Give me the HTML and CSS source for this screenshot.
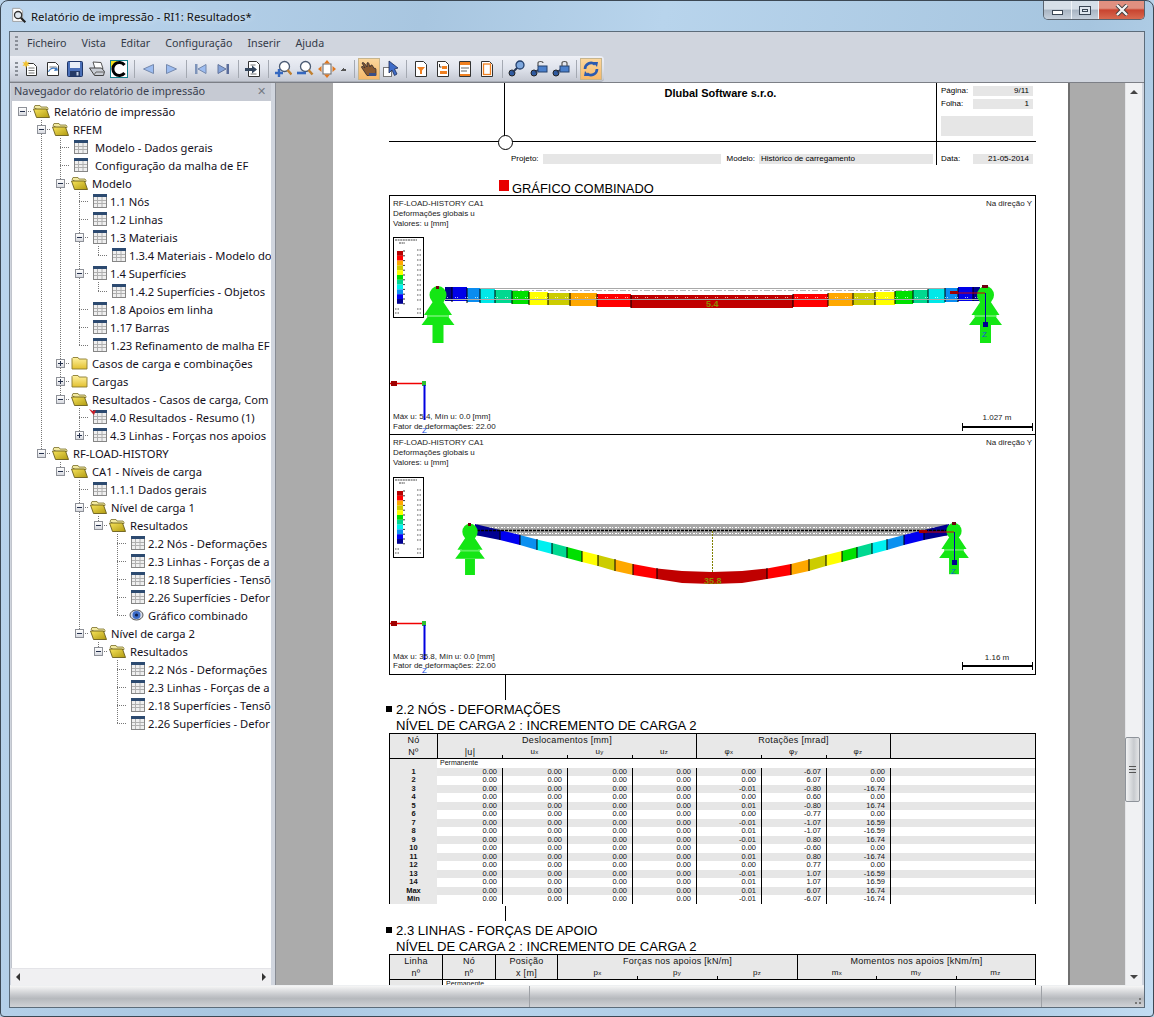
FILE: index.html
```html
<!DOCTYPE html>
<html lang="pt">
<head>
<meta charset="utf-8">
<title>Relatório de impressão - RI1: Resultados*</title>
<link rel="stylesheet" href="styles.css">
</head>
<body>
<svg class="defs" width="0" height="0" aria-hidden="true">
  <defs>
    <linearGradient id="fold" x1="0" y1="0" x2="1" y2="1"><stop offset="0" stop-color="#f8e45c"/><stop offset="1" stop-color="#b09a10"/></linearGradient>
    <linearGradient id="foldc" x1="0" y1="0" x2="0" y2="1"><stop offset="0" stop-color="#fff2a0"/><stop offset="1" stop-color="#e2c030"/></linearGradient>
    <symbol id="fo" viewBox="0 0 22 16"><path d="M2 4.500l1-2h5l1 1.500h6l1 1.500v1H5z" fill="#f2e9a0" stroke="#7a6e28" stroke-width=".8"/><path d="M1.500 6h13l3 8.500h-13z" fill="url(#fold)" stroke="#6a5e1c" stroke-width=".9"/></symbol>
    <symbol id="fc" viewBox="0 0 22 16"><path d="M2 14V3.500l1-1h5l1 1.500h7.500l.5 .5V14z" fill="url(#foldc)" stroke="#8a7a30" stroke-width=".9"/></symbol>
    <symbol id="tb" viewBox="0 0 21 16"><rect x="4.500" y="1.500" width="13" height="13" fill="#efefef" stroke="#858585"/><rect x="4" y="1" width="14" height="3" fill="#2c4a70"/><path d="M5 7.500h12M5 10.500h12M8.500 4v10M13 4v10" stroke="#b0b0b0"/></symbol>
    <symbol id="tp" viewBox="0 0 21 16"><rect x="4.500" y="1.500" width="13" height="13" fill="#efefef" stroke="#858585"/><rect x="4" y="1" width="14" height="3" fill="#2c4a70"/><path d="M5 7.500h12M5 10.500h12M8.500 4v10M13 4v10" stroke="#b0b0b0"/><path d="M0 0l4 2 3-1-2 5-2-2z" fill="#c8202a"/></symbol>
    <symbol id="ey" viewBox="0 0 21 16"><ellipse cx="9.500" cy="8" rx="6.500" ry="5" fill="#d8dde8" stroke="#555"/><circle cx="9.500" cy="8" r="4" fill="#3c6cc8"/><circle cx="9.500" cy="8" r="1.600" fill="#10204a"/></symbol>

    <symbol id="t-new" viewBox="0 0 18 18"><path d="M4.500 3.500h7l3 3v9h-10z" fill="#fff" stroke="#333"/><path d="M6.500 8h6M6.500 10.500h6M6.500 13h6" stroke="#777"/><path d="M4 0l1 2.500 2.500-.5L6 4l1.500 2L5 5.500 4 8 3 5.500.5 6 2 4 .5 2 3 2.500z" fill="#f2c230"/></symbol>
    <symbol id="t-open" viewBox="0 0 18 18"><path d="M3.500 2.500h8l3 3v10h-11z" fill="#fff" stroke="#333"/><path d="M5.500 7h7" stroke="#777"/><path d="M5 12c1-3 4-4 6-3l-1 2 4-.5-1-3.500-1 1c-3-1.500-7 0-8 4z" fill="#3a76c0"/></symbol>
    <symbol id="t-save" viewBox="0 0 18 18"><rect x="1.500" y="1.500" width="15" height="15" rx="1" fill="#4a6fb8" stroke="#1f3668"/><rect x="4" y="2" width="10" height="6" fill="#e8eef8"/><rect x="4" y="11" width="10" height="5.500" fill="#253a66"/><rect x="10.500" y="12" width="2" height="3.500" fill="#c8d4e8"/></symbol>
    <symbol id="t-print" viewBox="0 0 18 18"><path d="M5 2l8 .5 2 6H7z" fill="#fff" stroke="#555"/><path d="M1.500 8l5 7.500h9l1-4-3-3.500H6z" fill="#c8ccd4" stroke="#444"/><path d="M6 15l2-3h8" stroke="#666" fill="none"/></symbol>
    <symbol id="t-col" viewBox="0 0 18 18"><rect x=".5" y=".5" width="17" height="17" fill="#fff" stroke="#14808c"/><path d="M1 1h7L1 8z" fill="#f2e020"/><path d="M14.500 5A6.500 6.500 0 1 0 14.500 13" fill="none" stroke="#000" stroke-width="3"/></symbol>
    <symbol id="t-l" viewBox="0 0 18 18"><path d="M3.500 9L13.500 4.500v9z" fill="#9cbcf0" stroke="#7488ac"/></symbol>
    <symbol id="t-r" viewBox="0 0 18 18"><path d="M14.500 9L4.500 4.500v9z" fill="#9cbcf0" stroke="#7488ac"/></symbol>
    <symbol id="t-f" viewBox="0 0 18 18"><rect x="3" y="4" width="2.500" height="10" fill="#7e94ba"/><path d="M6 9l8-4.500v9z" fill="#9cbcf0" stroke="#7488ac"/></symbol>
    <symbol id="t-e" viewBox="0 0 18 18"><rect x="12.500" y="4" width="2.500" height="10" fill="#5a6c9a"/><path d="M12 9L4 4.500v9z" fill="#86a4da" stroke="#62749c"/></symbol>
    <symbol id="t-exp" viewBox="0 0 18 18"><path d="M4.500 1.500h8l3 3v12h-11z" fill="#fff" stroke="#333"/><path d="M6.500 5h5M6.500 14h6" stroke="#777"/><path d="M1 8h7V5.500l5 4-5 4V11H1z" fill="#33455c"/></symbol>
    <symbol id="t-zi" viewBox="0 0 18 18"><circle cx="10.500" cy="6.500" r="5" fill="#fff" stroke="#4a5a72" stroke-width="1.300"/><path d="M13.500 10l4 4.500" stroke="#c08030" stroke-width="2.500"/><path d="M5 9v8M1 13h8" stroke="#3568c0" stroke-width="2.400"/></symbol>
    <symbol id="t-zo" viewBox="0 0 18 18"><circle cx="9.500" cy="6.500" r="5" fill="#fff" stroke="#4a5a72" stroke-width="1.300"/><path d="M12.500 10l4 4.500" stroke="#c08030" stroke-width="2.500"/><path d="M1 13h9" stroke="#3568c0" stroke-width="2.600"/></symbol>
    <symbol id="t-fit" viewBox="0 0 18 18"><rect x="5" y="4" width="8" height="10" fill="#fff" stroke="#666"/><path d="M9 0l3 3.500H6zM9 18l-3-3.500h6zM0 9l3.500-3v6zM18 9l-3.500 3V6z" fill="#e07820"/></symbol>
    <symbol id="t-hand" viewBox="0 0 18 18"><path d="M2 3c1-1 2 0 3 1l2 3 0-4c1-1 2 0 2 1l1 3 1-2c1 0 2 .5 2 1.500l1 2 1-.5c1 .5 1 1.500 1 2.500v5H7L2 8c-1-1-.5-2 1-1.500l2 1.500z" fill="#8a5a30" stroke="#2e2a30" stroke-width=".8"/><path d="M9 13h7v3H9z" fill="#3a4f86"/></symbol>
    <symbol id="t-cur" viewBox="0 0 18 18"><rect x="1.500" y="7.500" width="8" height="9" fill="#fff" stroke="#777"/><path d="M7 1l9 7-3.500 1 2.500 5-2.500 1.500L10 10l-3 3z" fill="#3f6cc8" stroke="#1c2c58" stroke-width=".8"/></symbol>
    <symbol id="t-d1" viewBox="0 0 18 18"><path d="M3.500 1.500h8l3 3v12h-11z" fill="#fff" stroke="#333"/><path d="M5 7h8l-3 3.500V14H8v-3.500z" fill="#f08020"/></symbol>
    <symbol id="t-d2" viewBox="0 0 18 18"><path d="M3.500 1.500h8l3 3v12h-11z" fill="#fff" stroke="#333"/><path d="M5.500 4v3h2" stroke="#333" fill="none"/><rect x="8" y="6" width="5" height="3" fill="#f08020"/><rect x="6" y="11" width="7" height="3" fill="#f08020"/></symbol>
    <symbol id="t-d3" viewBox="0 0 18 18"><path d="M3.500 1.500h11v15h-11z" fill="#fff" stroke="#333"/><rect x="4" y="2" width="10" height="3" fill="#f08020"/><path d="M5 8h8M5 11h6" stroke="#999" stroke-width="1.300"/><rect x="4" y="14" width="10" height="2" fill="#f08020"/></symbol>
    <symbol id="t-d4" viewBox="0 0 18 18"><path d="M3.500 1.500h8l3 3v12h-11z" fill="#fff" stroke="#333"/><rect x="5.500" y="4" width="7" height="10.500" fill="#fff" stroke="#f08020" stroke-width="1.300"/></symbol>
    <symbol id="t-k1" viewBox="0 0 18 18"><circle cx="4" cy="13" r="3" fill="#2f5aa0" stroke="#222"/><path d="M5 12l6-6" stroke="#2a3a58" stroke-width="2"/><circle cx="12" cy="5" r="4" fill="#7ea8de" stroke="#24406c" stroke-width="1.300"/></symbol>
    <symbol id="t-k2" viewBox="0 0 18 18"><circle cx="4" cy="13" r="3" fill="#2f5aa0" stroke="#222"/><path d="M5 12l5-3" stroke="#2a3a58" stroke-width="2"/><rect x="8" y="6" width="9" height="6" fill="#4a80cc" stroke="#24406c"/><path d="M8 6V3c0-2 5-2 5 0" fill="none" stroke="#555" stroke-width="1.200"/></symbol>
    <symbol id="t-k3" viewBox="0 0 18 18"><circle cx="4" cy="13" r="3" fill="#2f5aa0" stroke="#222"/><path d="M5 12l5-3" stroke="#2a3a58" stroke-width="2"/><rect x="8" y="6" width="9" height="6" fill="#4a80cc" stroke="#24406c"/><path d="M10 6V3c0-2 5-2 5 0v3" fill="none" stroke="#555" stroke-width="1.200"/></symbol>
    <symbol id="t-ref" viewBox="0 0 18 18"><path d="M3 9a6 6 0 0 1 10-4.500" fill="none" stroke="#2a5ab0" stroke-width="2.600"/><path d="M15 9a6 6 0 0 1-10 4.500" fill="none" stroke="#2a5ab0" stroke-width="2.600"/><path d="M11 2l5 0-1 5zM7 16l-5 0 1-5z" fill="#2a5ab0"/></symbol>

    <g id="legend">
      <rect x=".5" y=".5" width="30" height="80" fill="#fff" stroke="#000"/>
      <path d="M2 3h22M6 6h6" stroke="#444" stroke-width="1.200" stroke-dasharray="2 .6"/>
      <rect x="4" y="14" width="6" height="4.800" fill="#b80000"/><rect x="4" y="18.800" width="6" height="4.800" fill="#ff0000"/><rect x="4" y="23.600" width="6" height="4.800" fill="#ffa800"/><rect x="4" y="28.400" width="6" height="4.800" fill="#cccc00"/><rect x="4" y="33.200" width="6" height="4.800" fill="#ffff00"/><rect x="4" y="38" width="6" height="4.800" fill="#00e000"/><rect x="4" y="42.800" width="6" height="4.800" fill="#00d890"/><rect x="4" y="47.600" width="6" height="4.800" fill="#00f0f0"/><rect x="4" y="52.400" width="6" height="4.800" fill="#0a90f0"/><rect x="4" y="57.200" width="6" height="4.800" fill="#0000f0"/><rect x="4" y="62" width="6" height="4.800" fill="#000090"/>
      <path d="M10 14h2M10 18.800h2M10 23.600h2M10 28.400h2M10 33.200h2M10 38h2M10 42.800h2M10 47.600h2M10 52.400h2M10 57.200h2M10 62h2M10 66.800h2" stroke="#000" stroke-width=".8"/>
      <path d="M24 13h4M24 18h4M24 23h4M24 28h4M24 33h4M24 38h4M24 43h4M24 48h4M24 53h4M24 58h4M24 63h4M24 72h4M24 76h4M2 72h4M2 76h4" stroke="#555" stroke-width="1.200" stroke-dasharray="1 .5"/>
    </g>
    <g id="support" fill="#14e614">
      <ellipse cx="0" cy="8" rx="8.500" ry="9"/>
      <path d="M-4 13L-14 28H-9L-16.500 38H16.500L9 28H14L4 13z"/>
      <rect x="-5.500" y="38" width="11" height="18"/>
      <path d="M-11 29h22" stroke="#5cf05c" stroke-width="2"/>
    </g>
  </defs>
</svg>

<div class="window">
  <header class="titlebar">
    <svg class="appicon" viewBox="0 0 20 20"><path d="M3 1.500h8l3 3V16H3z" fill="#fff" stroke="#999"/><circle cx="9" cy="9" r="4" fill="#dfe8f0" stroke="#333" stroke-width="1.400"/><path d="M12 12l5 5" stroke="#222" stroke-width="2.400"/></svg>
    <span class="wintitle">Relatório de impressão - RI1: Resultados*</span>
    <div class="caption">
      <span class="capbtn cap-min"><i></i></span>
      <span class="capbtn cap-max"><i></i></span>
      <span class="capbtn cap-close">
        <svg viewBox="0 0 14 12" width="14" height="12"><path d="M2 1l10 10M12 1L2 11" stroke="#3a3a3a" stroke-width="4"/><path d="M2 1l10 10M12 1L2 11" stroke="#f4f4f4" stroke-width="2.400"/></svg>
      </span>
    </div>
  </header>

  <div class="client">
    <nav class="menubar">
      <span class="grip"></span>
      <span class="menu">Ficheiro</span><span class="menu">Vista</span><span class="menu">Editar</span><span class="menu">Configuração</span><span class="menu">Inserir</span><span class="menu">Ajuda</span>
    </nav>

    <div class="toolrow">
      <div class="toolbar">
        <span class="grip"></span>
        <span class="tbtn"><svg><use href="#t-new"/></svg></span>
        <span class="tbtn"><svg><use href="#t-open"/></svg></span>
        <span class="tbtn"><svg><use href="#t-save"/></svg></span>
        <span class="tbtn"><svg><use href="#t-print"/></svg></span>
        <span class="tbtn"><svg><use href="#t-col"/></svg></span>
        <span class="tsep"></span>
        <span class="tbtn"><svg><use href="#t-l"/></svg></span>
        <span class="tbtn"><svg><use href="#t-r"/></svg></span>
        <span class="tsep"></span>
        <span class="tbtn"><svg><use href="#t-f"/></svg></span>
        <span class="tbtn"><svg><use href="#t-e"/></svg></span>
        <span class="tsep"></span>
        <span class="tbtn"><svg><use href="#t-exp"/></svg></span>
        <span class="tsep"></span>
        <span class="tbtn"><svg><use href="#t-zi"/></svg></span>
        <span class="tbtn"><svg><use href="#t-zo"/></svg></span>
        <span class="tbtn"><svg><use href="#t-fit"/></svg></span>
        <span class="tcaret"></span>
        <span class="tsep"></span>
        <span class="tbtn on"><svg><use href="#t-hand"/></svg></span>
        <span class="tbtn"><svg><use href="#t-cur"/></svg></span>
        <span class="tsep"></span>
        <span class="tbtn"><svg><use href="#t-d1"/></svg></span>
        <span class="tbtn"><svg><use href="#t-d2"/></svg></span>
        <span class="tbtn"><svg><use href="#t-d3"/></svg></span>
        <span class="tbtn"><svg><use href="#t-d4"/></svg></span>
        <span class="tsep"></span>
        <span class="tbtn"><svg><use href="#t-k1"/></svg></span>
        <span class="tbtn"><svg><use href="#t-k2"/></svg></span>
        <span class="tbtn"><svg><use href="#t-k3"/></svg></span>
        <span class="tsep"></span>
        <span class="tbtn on"><svg><use href="#t-ref"/></svg></span>
      </div>
    </div>

    <div class="main">
      <aside class="panel">
        <div class="panelhead"><span>Navegador do relatório de impressão</span><span class="panelx">✕</span></div>
        <div class="tree">
          <div class="row"><i class="c h"><b class="x m"></b></i><svg class="if"><use href="#fo"/></svg><span>Relatório de impressão</span></div>
          <div class="row"><i class="c"></i><i class="c t"><b class="x m"></b></i><svg class="if"><use href="#fo"/></svg><span>RFEM</span></div>
          <div class="row"><i class="c"></i><i class="c v"></i><i class="c t"></i><svg class="it"><use href="#tb"/></svg><span class="pad">Modelo - Dados gerais</span></div>
          <div class="row"><i class="c"></i><i class="c v"></i><i class="c t"></i><svg class="it"><use href="#tb"/></svg><span class="pad">Configuração da malha de EF</span></div>
          <div class="row"><i class="c"></i><i class="c v"></i><i class="c t"><b class="x m"></b></i><svg class="if"><use href="#fo"/></svg><span>Modelo</span></div>
          <div class="row"><i class="c"></i><i class="c v"></i><i class="c v"></i><i class="c t"></i><svg class="it"><use href="#tb"/></svg><span>1.1 Nós</span></div>
          <div class="row"><i class="c"></i><i class="c v"></i><i class="c v"></i><i class="c t"></i><svg class="it"><use href="#tb"/></svg><span>1.2 Linhas</span></div>
          <div class="row"><i class="c"></i><i class="c v"></i><i class="c v"></i><i class="c t"><b class="x m"></b></i><svg class="it"><use href="#tb"/></svg><span>1.3 Materiais</span></div>
          <div class="row"><i class="c"></i><i class="c v"></i><i class="c v"></i><i class="c v"></i><i class="c l"></i><svg class="it"><use href="#tb"/></svg><span>1.3.4 Materiais - Modelo do</span></div>
          <div class="row"><i class="c"></i><i class="c v"></i><i class="c v"></i><i class="c t"><b class="x m"></b></i><svg class="it"><use href="#tb"/></svg><span>1.4 Superfícies</span></div>
          <div class="row"><i class="c"></i><i class="c v"></i><i class="c v"></i><i class="c v"></i><i class="c l"></i><svg class="it"><use href="#tb"/></svg><span>1.4.2 Superfícies - Objetos</span></div>
          <div class="row"><i class="c"></i><i class="c v"></i><i class="c v"></i><i class="c t"></i><svg class="it"><use href="#tb"/></svg><span>1.8 Apoios em linha</span></div>
          <div class="row"><i class="c"></i><i class="c v"></i><i class="c v"></i><i class="c t"></i><svg class="it"><use href="#tb"/></svg><span>1.17 Barras</span></div>
          <div class="row"><i class="c"></i><i class="c v"></i><i class="c v"></i><i class="c l"></i><svg class="it"><use href="#tb"/></svg><span>1.23 Refinamento de malha EF</span></div>
          <div class="row"><i class="c"></i><i class="c v"></i><i class="c t"><b class="x p"></b></i><svg class="if"><use href="#fc"/></svg><span>Casos de carga e combinações</span></div>
          <div class="row"><i class="c"></i><i class="c v"></i><i class="c t"><b class="x p"></b></i><svg class="if"><use href="#fc"/></svg><span>Cargas</span></div>
          <div class="row"><i class="c"></i><i class="c v"></i><i class="c l"><b class="x m"></b></i><svg class="if"><use href="#fo"/></svg><span>Resultados - Casos de carga, Com</span></div>
          <div class="row"><i class="c"></i><i class="c v"></i><i class="c"></i><i class="c t"></i><svg class="it"><use href="#tp"/></svg><span>4.0 Resultados - Resumo (1)</span></div>
          <div class="row"><i class="c"></i><i class="c v"></i><i class="c"></i><i class="c l"><b class="x p"></b></i><svg class="it"><use href="#tb"/></svg><span>4.3 Linhas - Forças nos apoios</span></div>
          <div class="row"><i class="c"></i><i class="c l"><b class="x m"></b></i><svg class="if"><use href="#fo"/></svg><span>RF-LOAD-HISTORY</span></div>
          <div class="row"><i class="c"></i><i class="c"></i><i class="c l"><b class="x m"></b></i><svg class="if"><use href="#fo"/></svg><span>CA1 - Níveis de carga</span></div>
          <div class="row"><i class="c"></i><i class="c"></i><i class="c"></i><i class="c t"></i><svg class="it"><use href="#tb"/></svg><span>1.1.1 Dados gerais</span></div>
          <div class="row"><i class="c"></i><i class="c"></i><i class="c"></i><i class="c t"><b class="x m"></b></i><svg class="if"><use href="#fo"/></svg><span>Nível de carga 1</span></div>
          <div class="row"><i class="c"></i><i class="c"></i><i class="c"></i><i class="c v"></i><i class="c l"><b class="x m"></b></i><svg class="if"><use href="#fo"/></svg><span>Resultados</span></div>
          <div class="row"><i class="c"></i><i class="c"></i><i class="c"></i><i class="c v"></i><i class="c"></i><i class="c t"></i><svg class="it"><use href="#tb"/></svg><span>2.2 Nós - Deformações</span></div>
          <div class="row"><i class="c"></i><i class="c"></i><i class="c"></i><i class="c v"></i><i class="c"></i><i class="c t"></i><svg class="it"><use href="#tb"/></svg><span>2.3 Linhas - Forças de a</span></div>
          <div class="row"><i class="c"></i><i class="c"></i><i class="c"></i><i class="c v"></i><i class="c"></i><i class="c t"></i><svg class="it"><use href="#tb"/></svg><span>2.18 Superfícies - Tensõ</span></div>
          <div class="row"><i class="c"></i><i class="c"></i><i class="c"></i><i class="c v"></i><i class="c"></i><i class="c t"></i><svg class="it"><use href="#tb"/></svg><span>2.26 Superfícies - Defor</span></div>
          <div class="row"><i class="c"></i><i class="c"></i><i class="c"></i><i class="c v"></i><i class="c"></i><i class="c l"></i><svg class="it"><use href="#ey"/></svg><span>Gráfico combinado</span></div>
          <div class="row"><i class="c"></i><i class="c"></i><i class="c"></i><i class="c l"><b class="x m"></b></i><svg class="if"><use href="#fo"/></svg><span>Nível de carga 2</span></div>
          <div class="row"><i class="c"></i><i class="c"></i><i class="c"></i><i class="c"></i><i class="c l"><b class="x m"></b></i><svg class="if"><use href="#fo"/></svg><span>Resultados</span></div>
          <div class="row"><i class="c"></i><i class="c"></i><i class="c"></i><i class="c"></i><i class="c"></i><i class="c t"></i><svg class="it"><use href="#tb"/></svg><span>2.2 Nós - Deformações</span></div>
          <div class="row"><i class="c"></i><i class="c"></i><i class="c"></i><i class="c"></i><i class="c"></i><i class="c t"></i><svg class="it"><use href="#tb"/></svg><span>2.3 Linhas - Forças de a</span></div>
          <div class="row"><i class="c"></i><i class="c"></i><i class="c"></i><i class="c"></i><i class="c"></i><i class="c t"></i><svg class="it"><use href="#tb"/></svg><span>2.18 Superfícies - Tensõ</span></div>
          <div class="row"><i class="c"></i><i class="c"></i><i class="c"></i><i class="c"></i><i class="c"></i><i class="c l"></i><svg class="it"><use href="#tb"/></svg><span>2.26 Superfícies - Defor</span></div>
        </div>
        <div class="hscroll"><span class="arrow a-l"></span><span class="arrow a-r"></span></div>
      </aside>
      <div class="splitter"></div>

      <section class="viewer">
        <div class="canvas">
          <article class="page">
            <div class="sheethead">
              <div class="sh-a"></div>
              <div class="sh-b">Dlubal Software s.r.o.</div>
              <div class="sh-c">
                <div class="kv"><span>Página:</span><em>9/11</em></div>
                <div class="kv"><span>Folha:</span><em>1</em></div>
                <div class="blank"></div>
              </div>
              <div class="sh-d"></div>
              <div class="sh-e">
                <span class="lbl">Projeto:</span><em class="fld f-proj"></em>
                <span class="lbl l-mod">Modelo:</span><em class="fld f-mod">Histórico de carregamento</em>
              </div>
              <div class="sh-f"><div class="kv"><span>Data:</span><em>21-05-2014</em></div></div>
              <span class="cross"></span>
            </div>

            <h2 class="gtitle"><span class="redsq"></span><span class="gtext">GRÁFICO COMBINADO</span></h2>

            <div class="chart c1">
              <svg width="645" height="238" viewBox="390 196 645 238">
                <text class="ct" x="393" y="206">RF-LOAD-HISTORY CA1</text>
                <text class="ct" x="393" y="216">Deformações globais u</text>
                <text class="ct" x="393" y="226">Valores: u [mm]</text>
                <text class="ct" x="1032" y="206" text-anchor="end">Na direção Y</text>
                <use href="#legend" x="393" y="237"/>
                <path d="M445 288.500h540" stroke="#a8a8a8"/>
                <path d="M500 290.500h430" stroke="#b8b8b8" stroke-dasharray="6 2 2 2"/>
                <rect x="445" y="287" width="7" height="14" fill="#000090"/><rect x="452" y="287" width="15" height="14" fill="#0000e8"/><rect x="467" y="288" width="13" height="14" fill="#0a8cf0"/><rect x="480" y="289" width="15" height="14" fill="#00e8e8"/><rect x="495" y="290" width="17" height="13" fill="#00d890"/><rect x="512" y="291" width="17" height="13" fill="#00e000"/><rect x="529" y="292" width="19" height="13" fill="#ffff00"/><rect x="548" y="293" width="22" height="12" fill="#cccc00"/><rect x="570" y="293" width="27" height="13" fill="#ffa800"/><rect x="597" y="294" width="34" height="13" fill="#ff0000"/><rect x="631" y="295" width="162" height="13" fill="#c00000"/><rect x="793" y="294" width="35" height="13" fill="#ff0000"/><rect x="828" y="293" width="25" height="13" fill="#ffa800"/><rect x="853" y="293" width="22" height="12" fill="#cccc00"/><rect x="875" y="292" width="20" height="13" fill="#ffff00"/><rect x="895" y="291" width="18" height="13" fill="#00e000"/><rect x="913" y="290" width="15" height="13" fill="#00d890"/><rect x="928" y="289" width="17" height="14" fill="#00e8e8"/><rect x="945" y="288" width="13" height="14" fill="#0a8cf0"/><rect x="958" y="287" width="15" height="14" fill="#0000e8"/><rect x="973" y="287" width="7" height="14" fill="#000090"/>
                <path d="M452 287v15M467 288v15M480 289v14M495 290v13M512 291v13M529 292v13M548 293v12M570 293v13M597 294v13M631 295v13M793 294v13M828 293v13M853 293v12M875 292v13M895 291v13M913 290v13M928 289v14M945 288v14M958 288v14M973 287v14" stroke="#000" stroke-width="1"/>
                <path d="M445 299.500h540" stroke="#a8a8a8"/>
                <path d="M445 297.500h535" stroke="#fff" stroke-opacity=".7" stroke-dasharray="1 1 1 7"/>
                <text class="cv" x="706" y="307">5.4</text>
                <use href="#support" x="438" y="287"/>
                <use href="#support" x="985.500" y="287"/>
                <rect x="436" y="286" width="3" height="3" fill="#700010"/><rect x="982" y="285" width="6" height="3" fill="#700010"/>
                <path d="M950 293h35" stroke="#d00000"/><rect x="950" y="291" width="8" height="3" fill="#a00000"/>
                <path d="M985.500 293v30" stroke="#0000b0"/><rect x="983" y="322" width="5" height="5" fill="#000090"/>
                <text class="cz" x="982" y="337">Z</text>
                <path d="M390 383.500h34" stroke="#f00000" stroke-width="1.500"/><rect x="391" y="381" width="6" height="5" fill="#a00000"/>
                <rect x="422" y="381" width="4" height="5" fill="#30c030"/>
                <path d="M424.500 385v35" stroke="#0000e0" stroke-width="2"/>
                <text class="ct" x="393" y="419">Máx u: 5.4, Mín u: 0.0 [mm]</text>
                <text class="ct" x="393" y="429">Fator de deformações: 22.00</text>
                <text class="cz" x="422" y="433">Z</text>
                <text class="ct" x="997" y="420" text-anchor="middle">1.027 m</text>
                <path d="M962.500 423v8M1032.500 423v8" stroke="#000"/><path d="M962 427h71" stroke="#000" stroke-width="2"/>
              </svg>
            </div>

            <div class="chart c2">
              <svg width="645" height="239" viewBox="390 435 645 239">
                <text class="ct" x="393" y="445">RF-LOAD-HISTORY CA1</text>
                <text class="ct" x="393" y="455">Deformações globais u</text>
                <text class="ct" x="393" y="465">Valores: u [mm]</text>
                <text class="ct" x="1032" y="445" text-anchor="end">Na direção Y</text>
                <use href="#legend" x="393" y="477"/>
                <rect x="477" y="524" width="470" height="12" fill="#a8a8a8"/>
                <path d="M477 527.500h470M477 533.500h470" stroke="#fff" stroke-dasharray="2 1 1 2"/>
                <path d="M475 524L500 530V540L475 535z" fill="#000090"/>
                <path d="M500 530L520 535V545L500 540z" fill="#0000f0"/>
                <path d="M520 535L537 539.500V550L520 545z" fill="#0a90f0"/>
                <path d="M537 539.500L552 543V554L537 550z" fill="#00f0f0"/>
                <path d="M552 543L567 547V558L552 554z" fill="#00d890"/>
                <path d="M567 547L582 551V562L567 558z" fill="#00e000"/>
                <path d="M582 551L598 555V566L582 562z" fill="#ffff00"/>
                <path d="M598 555L615 559.500V571L598 566z" fill="#cccc00"/>
                <path d="M615 559.500L633 564V575L615 571z" fill="#ffa800"/>
                <path d="M633 564L657 568.500V579L633 575z" fill="#ff0000"/>
                <path d="M657 568.500L682 571L712 572L742 571L767 568.500V579L742 583L712 584L682 583L657 579z" fill="#c00000"/>
                <path d="M767 568.500L791 564V575L767 579z" fill="#ff0000"/>
                <path d="M791 564L809 559.500V571L791 575z" fill="#ffa800"/>
                <path d="M809 559.500L826 555V566L809 571z" fill="#cccc00"/>
                <path d="M826 555L842 551V562L826 566z" fill="#ffff00"/>
                <path d="M842 551L857 547V558L842 562z" fill="#00e000"/>
                <path d="M857 547L872 543V554L857 558z" fill="#00d890"/>
                <path d="M872 543L887 539.500V550L872 554z" fill="#00f0f0"/>
                <path d="M887 539.500L904 535V545L887 550z" fill="#0a90f0"/>
                <path d="M904 535L924 530V540L904 545z" fill="#0000f0"/>
                <path d="M924 530L949 524V535L924 540z" fill="#000090"/>
                <path d="M500 530v10M520 535v10M537 539v11M552 543v11M567 547v11M582 551v11M598 555v11M615 559v12M633 564v11M657 568v11M767 568v11M791 564v11M809 559v12M826 555v11M842 551v11M857 547v11M872 543v11M887 539v11M904 535v10M924 530v10" stroke="#000" stroke-width="1"/>
                <path d="M477 530.500h470" stroke="#000" stroke-width="1.500" stroke-dasharray="3 1"/>
                <path d="M712.500 531v41" stroke="#808000" stroke-dasharray="2 1"/>
                <text class="cv" x="704" y="584">35.8</text>
                <use href="#support" x="470" y="524" transform="translate(47 53) scale(.9)"/>
                <use href="#support" x="1060" y="582" transform="scale(.9)"/>
                <rect x="468" y="523" width="3" height="3" fill="#700010"/><rect x="952" y="522" width="4" height="3" fill="#700010"/>
                <path d="M919 532h35" stroke="#d00000"/><rect x="919" y="530" width="8" height="3" fill="#a00000"/>
                <path d="M954.500 532v30" stroke="#0000b0"/><rect x="952" y="560" width="5" height="5" fill="#000090"/>
                <text class="cz" x="951" y="574">Z</text>
                <path d="M390 623.500h34" stroke="#f00000" stroke-width="1.500"/><rect x="391" y="621" width="6" height="5" fill="#a00000"/>
                <rect x="422" y="621" width="4" height="5" fill="#30c030"/>
                <path d="M424.500 625v35" stroke="#0000e0" stroke-width="2"/>
                <text class="ct" x="393" y="659">Máx u: 35.8, Mín u: 0.0 [mm]</text>
                <text class="ct" x="393" y="668">Fator de deformações: 22.00</text>
                <text class="cz" x="422" y="673">Z</text>
                <text class="ct" x="997" y="660" text-anchor="middle">1.16 m</text>
                <path d="M962.500 662v8M1032.500 662v8" stroke="#000"/><path d="M962 666h71" stroke="#000" stroke-width="2"/>
              </svg>
            </div>

            <div class="tick t1"></div>

            <div class="sect">
              <span class="bullet"></span>
              <h3>2.2 NÓS - DEFORMAÇÕES<br>NÍVEL DE CARGA 2 : INCREMENTO DE CARGA 2</h3>
            </div>

            <div class="tbl t-a">
              <div class="th">
                <span class="r1">Nó</span><span class="r1 bl s4">Deslocamentos [mm]</span><span class="r1 bl s3">Rotações [mrad]</span><span class="r1 bl"></span>
                <span>Nº</span><span class="bl">|u|</span><span class="tk sm">u<sub>x</sub></span><span class="tk sm">u<sub>Y</sub></span><span class="tk sm">u<sub>z</sub></span><span class="bl sm">φ<sub>x</sub></span><span class="tk sm">φ<sub>Y</sub></span><span class="tk sm">φ<sub>z</sub></span><span class="bl"></span>
              </div>
              <div class="tr perm"><b></b><u>Permanente</u></div>
              <div class="tr"><b>1</b><i>0.00</i><i>0.00</i><i>0.00</i><i>0.00</i><i>0.00</i><i>-6.07</i><i>0.00</i><i></i></div>
              <div class="tr"><b>2</b><i>0.00</i><i>0.00</i><i>0.00</i><i>0.00</i><i>0.00</i><i>6.07</i><i>0.00</i><i></i></div>
              <div class="tr"><b>3</b><i>0.00</i><i>0.00</i><i>0.00</i><i>0.00</i><i>-0.01</i><i>-0.80</i><i>-16.74</i><i></i></div>
              <div class="tr"><b>4</b><i>0.00</i><i>0.00</i><i>0.00</i><i>0.00</i><i>0.00</i><i>0.60</i><i>0.00</i><i></i></div>
              <div class="tr"><b>5</b><i>0.00</i><i>0.00</i><i>0.00</i><i>0.00</i><i>0.01</i><i>-0.80</i><i>16.74</i><i></i></div>
              <div class="tr"><b>6</b><i>0.00</i><i>0.00</i><i>0.00</i><i>0.00</i><i>0.00</i><i>-0.77</i><i>0.00</i><i></i></div>
              <div class="tr"><b>7</b><i>0.00</i><i>0.00</i><i>0.00</i><i>0.00</i><i>-0.01</i><i>-1.07</i><i>16.59</i><i></i></div>
              <div class="tr"><b>8</b><i>0.00</i><i>0.00</i><i>0.00</i><i>0.00</i><i>0.01</i><i>-1.07</i><i>-16.59</i><i></i></div>
              <div class="tr"><b>9</b><i>0.00</i><i>0.00</i><i>0.00</i><i>0.00</i><i>-0.01</i><i>0.80</i><i>16.74</i><i></i></div>
              <div class="tr"><b>10</b><i>0.00</i><i>0.00</i><i>0.00</i><i>0.00</i><i>0.00</i><i>-0.60</i><i>0.00</i><i></i></div>
              <div class="tr"><b>11</b><i>0.00</i><i>0.00</i><i>0.00</i><i>0.00</i><i>0.01</i><i>0.80</i><i>-16.74</i><i></i></div>
              <div class="tr"><b>12</b><i>0.00</i><i>0.00</i><i>0.00</i><i>0.00</i><i>0.00</i><i>0.77</i><i>0.00</i><i></i></div>
              <div class="tr"><b>13</b><i>0.00</i><i>0.00</i><i>0.00</i><i>0.00</i><i>-0.01</i><i>1.07</i><i>-16.59</i><i></i></div>
              <div class="tr"><b>14</b><i>0.00</i><i>0.00</i><i>0.00</i><i>0.00</i><i>0.01</i><i>1.07</i><i>16.59</i><i></i></div>
              <div class="tr"><b>Max</b><i>0.00</i><i>0.00</i><i>0.00</i><i>0.00</i><i>0.01</i><i>6.07</i><i>16.74</i><i></i></div>
              <div class="tr"><b>Min</b><i>0.00</i><i>0.00</i><i>0.00</i><i>0.00</i><i>-0.01</i><i>-6.07</i><i>-16.74</i><i></i></div>
            </div>

            <div class="tick t2"></div>

            <div class="sect">
              <span class="bullet"></span>
              <h3>2.3 LINHAS - FORÇAS DE APOIO<br>NÍVEL DE CARGA 2 : INCREMENTO DE CARGA 2</h3>
            </div>

            <div class="tbl t-b">
              <div class="th">
                <span class="r1">Linha</span><span class="r1 bl">Nó</span><span class="r1 bl">Posição</span><span class="r1 bl s3">Forças nos apoios [kN/m]</span><span class="r1 bl s3">Momentos nos apoios [kNm/m]</span>
                <span>nº</span><span class="bl">nº</span><span class="bl">x [m]</span><span class="bl sm">p<sub>x</sub></span><span class="tk sm">p<sub>Y</sub></span><span class="tk sm">p<sub>z</sub></span><span class="bl sm">m<sub>x</sub></span><span class="tk sm">m<sub>Y</sub></span><span class="tk sm">m<sub>z</sub></span>
              </div>
              <div class="tr perm"><b></b><u class="bl">Permanente</u></div>
            </div>
          </article>
        </div>
        <div class="vscroll">
          <span class="arrow a-u"></span>
          <span class="thumb"><i></i></span>
          <span class="arrow a-d"></span>
        </div>
      </section>
    </div>

    <footer class="statusbar">
      <span class="s s1"></span><span class="s s2"></span><span class="s s3b"></span><span class="s s4b"></span>
    </footer>
  </div>
</div>
</body>
</html>
```
FILE: styles.css
```css
* { box-sizing: border-box; }
html, body { margin: 0; padding: 0; }
body { width: 1154px; height: 1017px; overflow: hidden; background: #b9d3ea; font-family: "Noto Sans", "Liberation Sans", sans-serif; color: #111; }
.defs { position: absolute; }
i, em, u, b { font-style: normal; text-decoration: none; font-weight: normal; }

.window { width: 1154px; height: 1017px; display: flex; flex-direction: column; padding: 0 8px 8px; border: 1px solid #3c4854; border-radius: 8px 8px 4px 4px; background: linear-gradient(100deg, #bcd6ee 0%, #a8c6e0 32%, #b8d4ec 50%, #a6c5df 82%, #c2dcf2 100%); }
.titlebar { height: 30px; flex: none; display: flex; align-items: center; margin-left: -1px; position: relative; }
.appicon { width: 18px; height: 18px; margin: 0 3px 0 2px; flex: none; }
.wintitle { font-size: 11.35px; color: #111; text-shadow: 0 0 6px #e8f2fb; }
.caption { display: flex; height: 19px; margin-left: auto; margin-top: -11px; border: 1px solid #59636e; border-top: 0; border-radius: 0 0 5px 5px; overflow: hidden; }
.capbtn { display: grid; place-items: center; height: 18px; background: linear-gradient(#d6dfe8 0 45%, #a8b4c2 50%, #c6d0dc 100%); border-right: 1px solid #f0f4f8; }
.cap-min { width: 28px; }
.cap-min i { width: 11px; height: 5px; background: #fff; border: 1px solid #3a4654; margin-top: 4px; }
.cap-max { width: 27px; }
.cap-max i { width: 12px; height: 9px; background: #dfe6ee; border: 1px solid #3a4654; box-shadow: inset 0 0 0 2px #dfe6ee, inset 0 0 0 3px #3a4654; }
.cap-close { width: 45px; border-right: 0; background: linear-gradient(#e09080 0 40%, #c84430 50%, #d86a50 100%); }

.client { flex: 1; min-height: 0; display: flex; flex-direction: column; background: #d0d5de; border: 1px solid #5c6c7a; }
.menubar { height: 24px; flex: none; display: flex; align-items: center; padding: 0 0 2px 5px; font-size: 10.7px; }
.grip { width: 3px; height: 14px; flex: none; background: repeating-linear-gradient(#8a8f98 0 2px, transparent 2px 4px); }
.menubar .grip { margin-right: 9px; }
.menu { color: #333a48; margin-right: 15px; }
.toolrow { height: 26px; flex: none; display: flex; }
.toolbar { width: 594px; display: flex; align-items: center; padding-left: 5px; background: linear-gradient(#eef0f6, #dfe3ec 50%, #c4c8d2); border-radius: 0 4px 4px 0; border-bottom: 1px solid #a8adb6; }
.toolbar .grip { margin-right: 2px; }
.tbtn { width: 22px; height: 22px; flex: none; display: grid; place-items: center; }
.tbtn svg { width: 18px; height: 18px; }
.tbtn.on { background: linear-gradient(#fbd79c, #f6b869); border: 1px solid #c6b58e; }
.tsep { width: 8px; height: 18px; flex: none; background: linear-gradient(#a4a9b2, #a4a9b2) center / 1px 100% no-repeat; }
.tcaret { width: 12px; height: 22px; flex: none; background: linear-gradient(135deg, transparent 50%, #555 50%) 3px 10px / 3px 3px no-repeat, linear-gradient(225deg, transparent 50%, #555 50%) 6px 10px / 3px 3px no-repeat; }

.main { flex: 1; min-height: 0; display: flex; border-top: 1px solid #7c7f86; }
.panel { width: 260px; flex: none; display: flex; flex-direction: column; margin-left: 1px; }
.panelhead { height: 18px; flex: none; display: flex; align-items: center; justify-content: space-between; padding: 0 5px 3px 3px; font-size: 10.9px; color: #3a4150; background: #c6cad3; }
.panelx { font-size: 11px; color: #757a84; }
.tree { flex: 1; min-height: 0; overflow: hidden; background: #fff; padding: 1px 0 0 1px; border-left: 1px solid #c0c4cc; font-size: 11.2px; }
.row { height: 18px; display: flex; align-items: center; white-space: nowrap; color: #14101c; }
.pad { padding-left: 4px; }
.c { width: 19px; height: 18px; flex: none; display: grid; place-items: center; }
.v { background: repeating-linear-gradient(#777 0 1px, transparent 1px 2px) 9px 0 / 1px 100% no-repeat; }
.t { background: repeating-linear-gradient(#777 0 1px, transparent 1px 2px) 9px 0 / 1px 100% no-repeat, repeating-linear-gradient(90deg, #777 0 1px, transparent 1px 2px) 9px 9px / 10px 1px no-repeat; }
.l { background: repeating-linear-gradient(#777 0 1px, transparent 1px 2px) 9px 0 / 1px 9px no-repeat, repeating-linear-gradient(90deg, #777 0 1px, transparent 1px 2px) 9px 9px / 10px 1px no-repeat; }
.h { background: repeating-linear-gradient(90deg, #777 0 1px, transparent 1px 2px) 9px 9px / 10px 1px no-repeat; }
.x { width: 9px; height: 9px; border: 1px solid #8e9198; background-color: #f4f4f6; margin-left: -1px; }
.x.m { background: linear-gradient(#24304c, #24304c) center / 5px 1px no-repeat, linear-gradient(#fff, #d8dae0); }
.x.p { background: linear-gradient(#24304c, #24304c) center / 5px 1px no-repeat, linear-gradient(#24304c, #24304c) center / 1px 5px no-repeat, linear-gradient(#fff, #d8dae0); }
.if { width: 22px; height: 16px; flex: none; }
.it { width: 21px; height: 16px; flex: none; }
.hscroll { height: 17px; flex: none; background: #f0f0f2; display: flex; justify-content: space-between; align-items: center; padding: 0 5px; border-top: 1px solid #e4e4e8; }
.arrow { width: 0; height: 0; border: 4px solid transparent; display: block; }
.a-l { border-right: 4px solid #333; border-left: 0; }
.a-r { border-left: 4px solid #333; border-right: 0; }
.splitter { width: 5px; flex: none; background: #d0d5de; border-right: 1px solid #878b93; }

.viewer { flex: 1; min-width: 0; display: flex; }
.canvas { width: 849px; flex: none; overflow: hidden; background: #ababab; padding-left: 57px; }
.page { width: 737px; height: 1100px; background: #fff; border-right: 2px solid #6f6f6f; padding-left: 56px; color: #000; font-family: "Liberation Sans", Arial, sans-serif; }
.vscroll { width: 17px; flex: none; background: #f0f1f3; display: flex; flex-direction: column; align-items: center; padding: 7px 0 6px; border-left: 1px solid #e4e5e8; }
.a-u { border-bottom: 4px solid #444; border-top: 0; }
.a-d { border-top: 4px solid #444; border-bottom: 0; margin-top: 173px; }
.thumb { width: 15px; height: 65px; margin: 643px 0 0 -3px; display: grid; place-items: center; border: 1px solid #8e939a; border-radius: 2px; background: linear-gradient(90deg, #f2f3f4, #c8cbcf 60%, #e4e5e7); }
.thumb i { width: 7px; height: 8px; background: repeating-linear-gradient(#555 0 1px, transparent 1px 3px); }

.statusbar { height: 22px; flex: none; display: flex; background: linear-gradient(#f6f6f6, #c4c6ca 45%, #b6b9bd 60%, #d0d2d6); border-top: 1px solid #eef0f2; }
.s { height: 100%; border-right: 1px solid #9ea1a6; }
.s1 { width: 520px; } .s2 { width: 426px; } .s3b { width: 86px; } .s4b { flex: 1; border-right: 0; background: radial-gradient(circle, #777 1px, transparent 1.300px) right 2px bottom 2px / 4px 4px no-repeat, radial-gradient(circle, #777 1px, transparent 1.300px) right 6px bottom 2px / 4px 4px no-repeat, radial-gradient(circle, #777 1px, transparent 1.300px) right 2px bottom 6px / 4px 4px no-repeat; }

.sheethead { width: 647px; height: 82px; display: grid; grid-template-columns: 116px 432px 99px; grid-template-rows: 59px 23px; position: relative; font-size: 8px; }
.sh-a { border-right: 1px solid #000; border-bottom: 1px solid #000; }
.sh-b { border-bottom: 1px solid #000; border-right: 1px solid #000; text-align: center; font-weight: bold; font-size: 11px; padding-top: 4px; }
.sh-c { border-bottom: 1px solid #000; padding: 3px 3px 0 4px; }
.sh-e { border-right: 1px solid #000; display: flex; align-items: flex-end; padding: 0 3px 1px 6px; }
.sh-f { padding: 0 3px 1px 4px; display: flex; align-items: flex-end; }
.kv { display: flex; height: 10px; line-height: 10px; justify-content: space-between; width: 100%; margin-bottom: 3px; }
.kv em { width: 60px; background: #e6e6e6; text-align: right; padding-right: 4px; }
.sh-f .kv { margin-bottom: 0; }
.blank { height: 20px; background: #e6e6e6; margin-top: 7px; }
.lbl { line-height: 10px; }
.l-mod { margin-left: 6px; }
.fld { height: 10px; line-height: 10px; background: #e6e6e6; padding-left: 2px; margin-left: 4px; }
.f-proj { width: 178px; }
.f-mod { flex: 1; margin-left: 4px; }
.cross { position: absolute; left: 109px; top: 52px; width: 15px; height: 15px; border: 1px solid #000; border-radius: 50%; background: #fff; }

.gtitle { margin: 15px 0 0; height: 15px; font-size: 12.9px; font-weight: normal; line-height: 15px; display: flex; align-items: flex-start; padding-left: 110px; white-space: nowrap; }
.gtext { padding-top: 1px; }
.redsq { width: 10px; height: 11px; background: #e80000; margin-right: 3px; flex: none; }

.chart { width: 647px; border: 1px solid #000; border-bottom: 0; overflow: hidden; }
.chart svg { display: block; }
.c2 { border-bottom: 1px solid #000; }
.ct { font: 8px "Liberation Sans", Arial, sans-serif; fill: #222; }
.cv { font: bold 9px "Liberation Sans", Arial, sans-serif; fill: #8c8c00; }
.cz { font: 8px "Liberation Sans", Arial, sans-serif; fill: #1a50e0; }

.tick { width: 1px; background: #000; margin-left: 116px; }
.t1 { height: 25px; }
.t2 { height: 15px; margin-top: 2px; }
.sect { display: flex; margin-left: -3px; height: 33px; padding-top: 2px; }
.bullet { width: 6px; height: 6px; background: #000; margin: 4px 4px 0 0; flex: none; }
.sect h3 { margin: 0; font-size: 13.1px; font-weight: normal; line-height: 16px; white-space: nowrap; }

.tbl { width: 647px; border-left: 1px solid #000; border-right: 1px solid #000; font-size: 7.5px; color: #111; }
.th { display: grid; height: 26px; grid-template-rows: 12px 12px; border-top: 1px solid #000; border-bottom: 1px solid #000; background: #e8e8e8; font-size: 9px; letter-spacing: .3px; text-align: center; line-height: 12px; }
.t-a .th, .t-a .tr { grid-template-columns: 47px 65px 65px 65px 64px 65px 65px 64px 145px; }
.t-b .th, .t-b .tr { grid-template-columns: 52px 53px 62px 80px 80px 80px 79px 80px 79px; }
.bl { border-left: 1px solid #000; }
.s3 { grid-column: span 3; }
.s4 { grid-column: span 4; }
.sm { font-size: 8px; }
.sm sub { font-size: 6px; vertical-align: baseline; text-transform: lowercase; }
.tk { background: linear-gradient(#000, #000) left bottom / 1px 3px no-repeat; }
.tr { display: grid; height: 8.5px; line-height: 8.5px; background: #fff; }
.tr:nth-child(odd) { background: #e6e6e6; }
.tr b { background: #e8e8e8; text-align: center; font-weight: bold; }
.tr i { text-align: right; padding-right: 5px; border-left: 1px solid #000; }
.tr b + i { border-left: 0; }
.tr.perm { height: 8.5px; background: #fff; }
.tr u { grid-column: 2 / -1; padding-left: 3px; font-size: 7px; line-height: 8.5px; }
```
